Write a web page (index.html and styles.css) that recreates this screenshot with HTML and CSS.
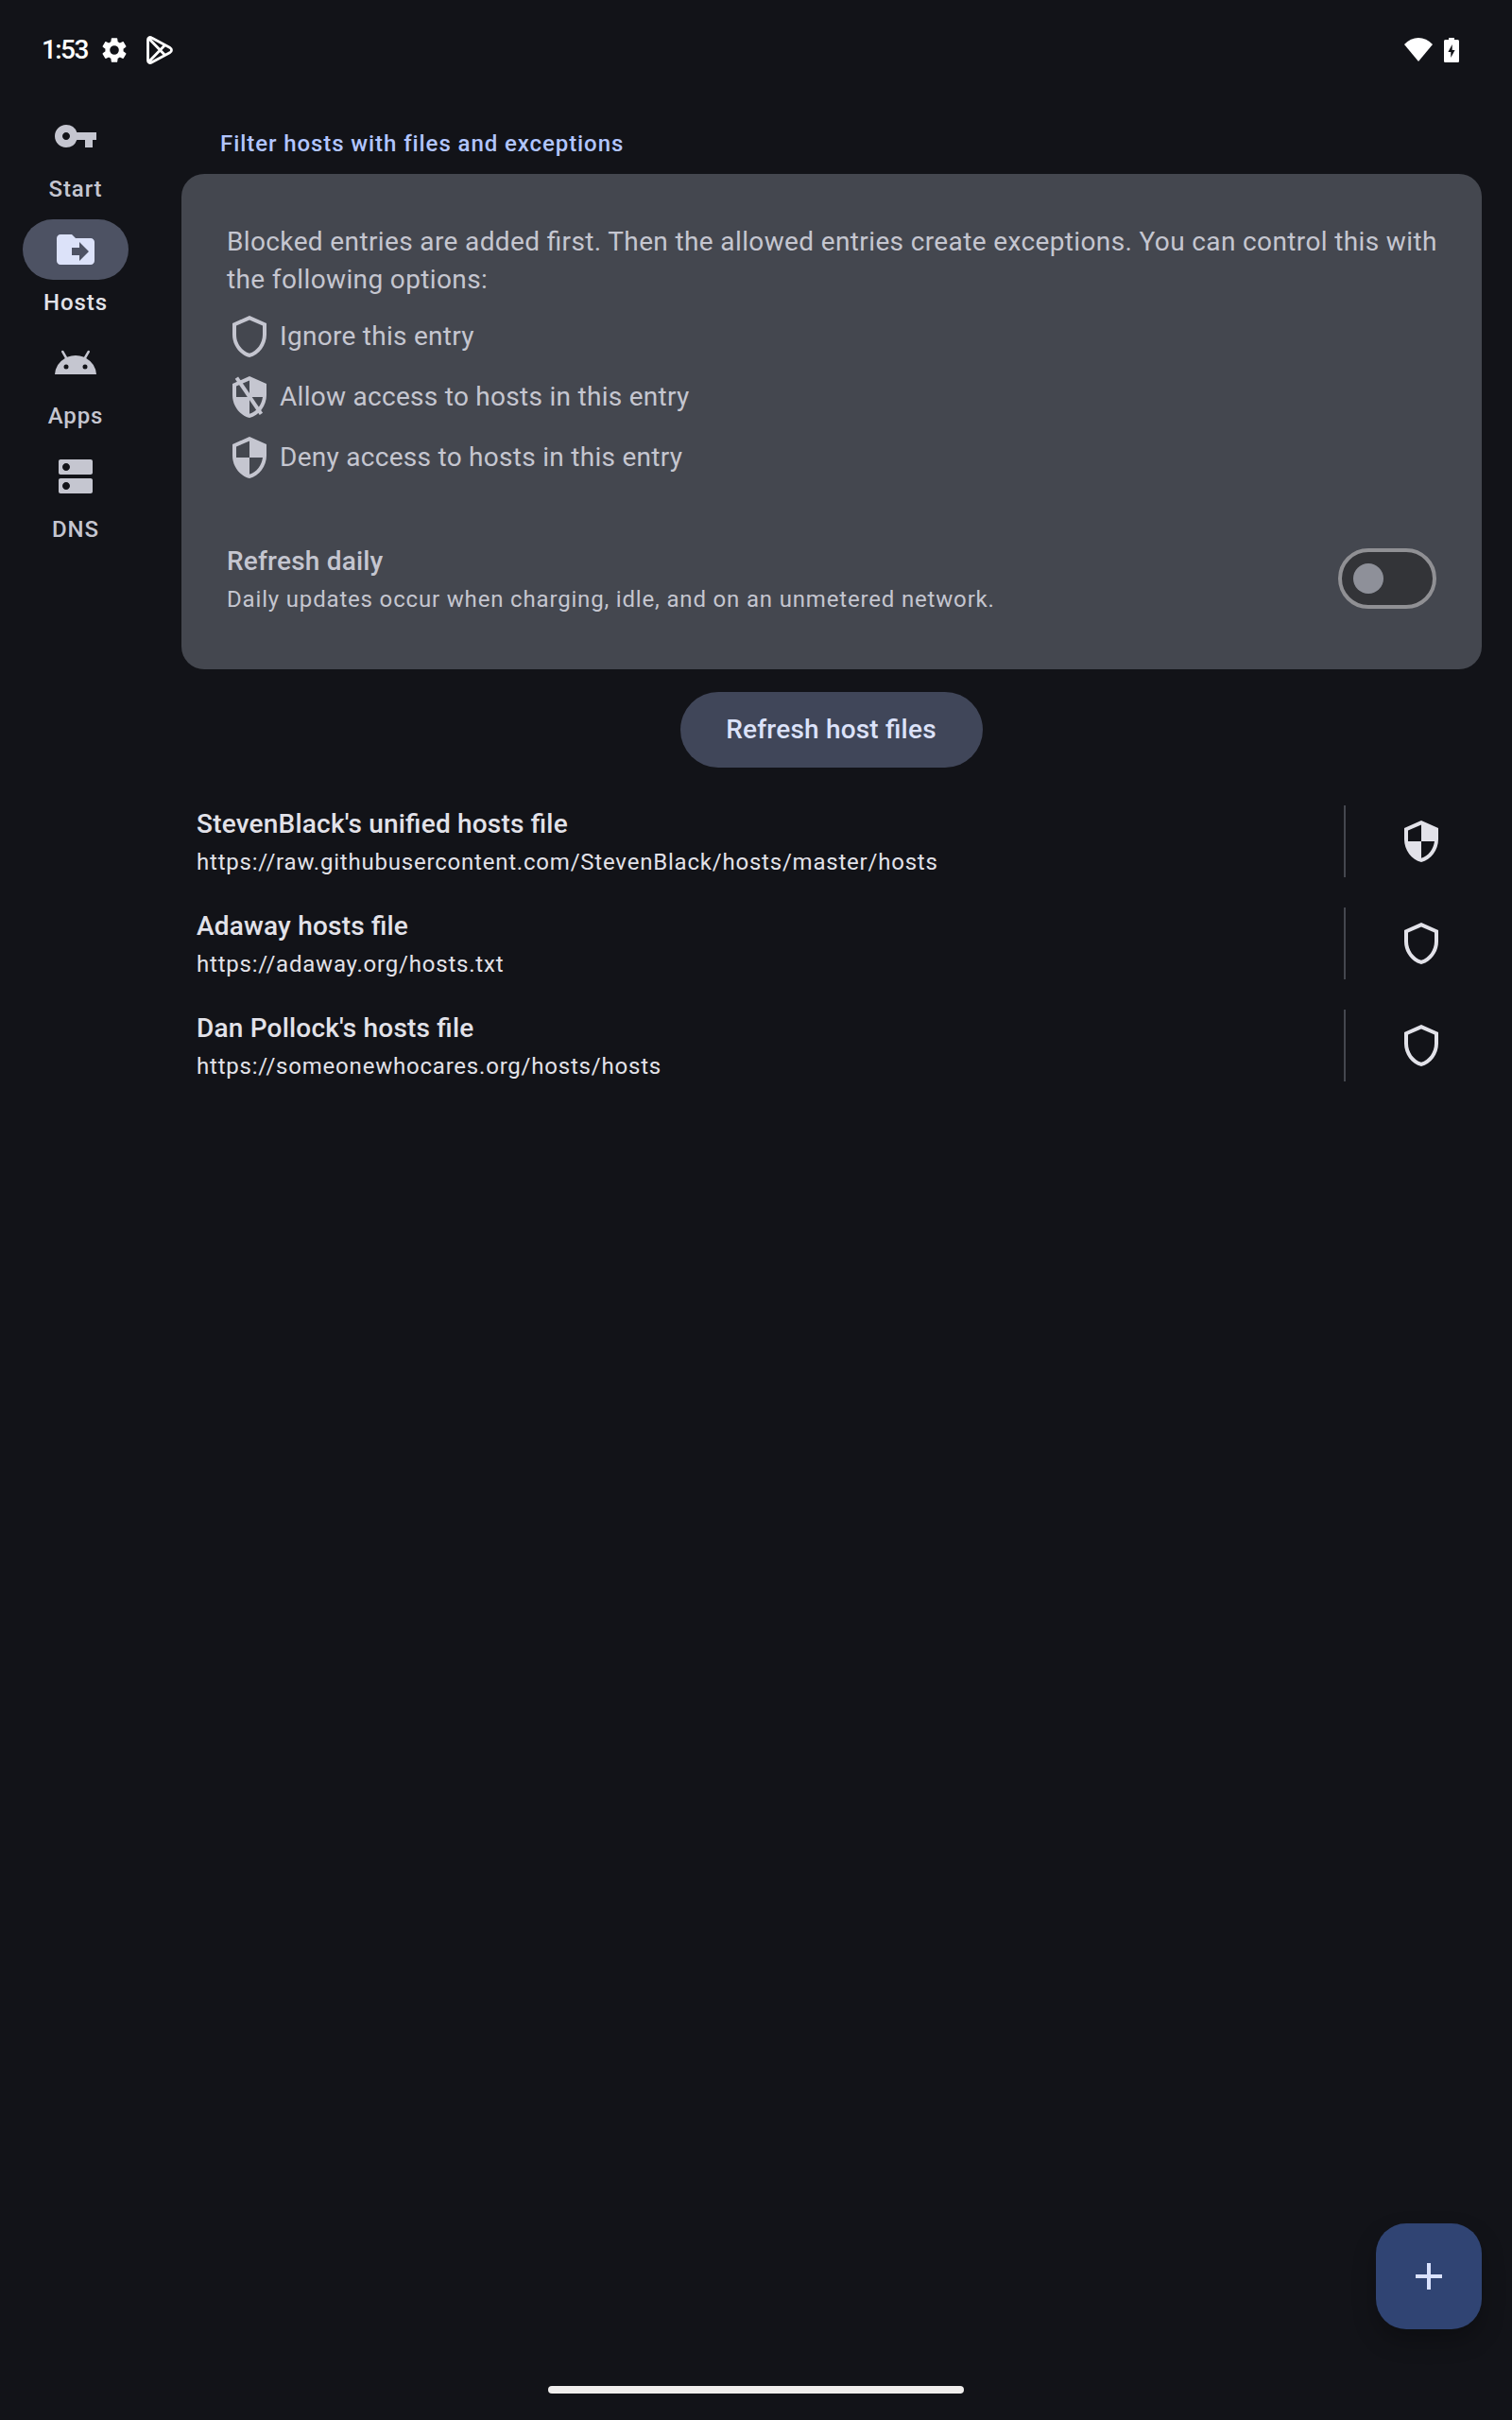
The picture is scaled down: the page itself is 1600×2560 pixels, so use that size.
FILE: index.html
```html
<!DOCTYPE html>
<html lang="en">
<head>
<meta charset="utf-8">
<title>Hosts</title>
<link rel="stylesheet" href="styles.css">
</head>
<body>
<svg class="defs" aria-hidden="true">
  <symbol id="shield" viewBox="0 0 24 24"><path d="M12 1L3 5v6c0 5.55 3.84 10.74 9 12 5.16-1.26 9-6.45 9-12V5l-9-4zm7 10c0 4.52-2.98 8.69-7 9.93-4.02-1.24-7-5.41-7-9.93V6.3l7-3.11 7 3.11V11z"/></symbol>
  <symbol id="shield-deny" viewBox="0 0 24 24"><path d="M12 1L3 5v6c0 5.55 3.84 10.74 9 12 5.16-1.26 9-6.45 9-12V5l-9-4zm0 10.99h7c-.53 4.12-3.28 7.79-7 8.94V12H5V6.3l7-3.11v8.8z"/></symbol>
</svg>
<div class="screen">
  <header class="status">
    <div class="status-left">
      <span class="clock">1:53</span>
      <svg class="gear" viewBox="0 0 24 24"><path d="M19.14 12.94c.04-.3.06-.61.06-.94 0-.32-.02-.64-.07-.94l2.03-1.58c.18-.14.23-.41.12-.61l-1.92-3.32c-.12-.22-.37-.29-.59-.22l-2.39.96c-.5-.38-1.03-.7-1.62-.94l-.36-2.54c-.04-.24-.24-.41-.48-.41h-3.84c-.24 0-.43.17-.47.41l-.36 2.54c-.59.24-1.13.57-1.62.94l-2.39-.96c-.22-.08-.47 0-.59.22L2.74 8.87c-.12.21-.08.47.12.61l2.03 1.58c-.05.3-.09.63-.09.94s.02.64.07.94l-2.03 1.58c-.18.14-.23.41-.12.61l1.92 3.32c.12.22.37.29.59.22l2.39-.96c.5.38 1.03.7 1.62.94l.36 2.54c.05.24.24.41.48.41h3.84c.24 0 .44-.17.47-.41l.36-2.54c.59-.24 1.13-.56 1.62-.94l2.39.96c.22.08.47 0 .59-.22l1.92-3.32c.12-.22.07-.47-.12-.61l-2.01-1.58zM12 15.6A3.6 3.6 0 1 1 12 8.4a3.6 3.6 0 0 1 0 7.2z"/></svg>
      <svg class="play" viewBox="0 0 28 30"><path class="line" d="M1.5 4v22c0 2.200 2 3.200 4 2l19.500-10.600c2-1.200 2-3.600 0-4.800L5.500 2c-2-1.200-4-.2-4 2zM2.300 2.600L19.500 20.300M2.300 27.400L19.500 9.700"/></svg>
    </div>
    <div class="status-right">
      <svg class="wifi" viewBox="0 0 30 25"><path d="M0 7C8.500-2.200 21.500-2.200 30 7L15 25z"/></svg>
      <svg class="battery" viewBox="0 0 16 26"><path fill-rule="evenodd" d="M5 0h6v2h3.400c.9 0 1.600.7 1.600 1.600v20.800c0 .9-.7 1.600-1.600 1.600H1.600C.7 26 0 25.300 0 24.400V3.600C0 2.700.7 2 1.600 2H5zM8.700 7L4.400 15H7.300v6L11.600 13H8.700z"/></svg>
    </div>
  </header>
  <div class="body">
    <nav class="rail">
      <a class="item"><span class="pill"><svg viewBox="0 0 24 24"><path d="M12.650 10A5.990 5.990 0 0 0 7 6c-3.310 0-6 2.690-6 6s2.690 6 6 6a5.990 5.990 0 0 0 5.650-4H17v4h4v-4h2v-4H12.650zM7 14c-1.100 0-2-.9-2-2s.9-2 2-2 2 .9 2 2-.9 2-2 2z"/></svg></span><span>Start</span></a>
      <a class="item active"><span class="pill"><svg viewBox="0 0 24 24"><path d="M20 6h-8l-2-2H4c-1.100 0-1.990.9-1.990 2L2 18c0 1.100.9 2 2 2h16c1.100 0 2-.9 2-2V8c0-1.100-.9-2-2-2zm-6 12v-3h-4v-4h4V8l5 5-5 5z"/></svg></span><span>Hosts</span></a>
      <a class="item"><span class="pill"><svg viewBox="0 0 24 24"><path d="M17.600 9.480l1.840-3.180c.16-.31.04-.69-.26-.85-.29-.15-.65-.06-.83.22l-1.880 3.240a11.430 11.430 0 0 0-8.940 0L5.650 5.670c-.19-.29-.58-.38-.87-.2-.28.18-.37.54-.22.83L6.400 9.480A10.780 10.780 0 0 0 1 18h22a10.780 10.780 0 0 0-5.400-8.520zM7 15.250a1.250 1.250 0 1 1 0-2.500 1.250 1.250 0 0 1 0 2.500zm10 0a1.250 1.250 0 1 1 0-2.500 1.250 1.250 0 0 1 0 2.500z"/></svg></span><span>Apps</span></a>
      <a class="item"><span class="pill"><svg viewBox="0 0 24 24"><path d="M20 13H4c-.55 0-1 .45-1 1v6c0 .55.45 1 1 1h16c.55 0 1-.45 1-1v-6c0-.55-.45-1-1-1zM7 19c-1.100 0-2-.9-2-2s.9-2 2-2 2 .9 2 2-.9 2-2 2zM20 3H4c-.55 0-1 .45-1 1v6c0 .55.45 1 1 1h16c.55 0 1-.45 1-1V4c0-.55-.45-1-1-1zM7 9c-1.100 0-2-.9-2-2s.9-2 2-2 2 .9 2 2-.9 2-2 2z"/></svg></span><span>DNS</span></a>
    </nav>
    <main class="content">
      <h1 class="heading">Filter hosts with files and exceptions</h1>
      <section class="card">
        <p class="intro">Blocked entries are added first. Then the allowed entries create exceptions. You can control this with the following options:</p>
        <ul class="legend">
          <li><svg class="icon"><use href="#shield"/></svg>Ignore this entry</li>
          <li><svg class="icon" viewBox="0 0 24 24"><use href="#shield-deny"/><path class="slash" d="M5.200 1.800L18.200 20.900"/></svg>Allow access to hosts in this entry</li>
          <li><svg class="icon"><use href="#shield-deny"/></svg>Deny access to hosts in this entry</li>
        </ul>
        <div class="setting">
          <div class="setting-text">
            <div class="title">Refresh daily</div>
            <div class="detail">Daily updates occur when charging, idle, and on an unmetered network.</div>
          </div>
          <span class="switch"><span class="thumb"></span></span>
        </div>
      </section>
      <button class="refresh">Refresh host files</button>
      <div class="hosts">
        <div class="host"><div class="host-text"><div class="title">StevenBlack's unified hosts file</div><div class="detail">https://raw.githubusercontent.com/StevenBlack/hosts/master/hosts</div></div><div class="host-action"><svg class="icon"><use href="#shield-deny"/></svg></div></div>
        <div class="host"><div class="host-text"><div class="title">Adaway hosts file</div><div class="detail">https://adaway.org/hosts.txt</div></div><div class="host-action"><svg class="icon"><use href="#shield"/></svg></div></div>
        <div class="host"><div class="host-text"><div class="title">Dan Pollock's hosts file</div><div class="detail">https://someonewhocares.org/hosts/hosts</div></div><div class="host-action"><svg class="icon"><use href="#shield"/></svg></div></div>
      </div>
    </main>
  </div>
  <button class="fab" aria-label="Add"><svg class="icon" viewBox="0 0 24 24"><path d="M19 13h-6v6h-2v-6H5v-2h6V5h2v6h6v2z"/></svg></button>
  <div class="home-bar"></div>
</div>
</body>
</html>
```
FILE: styles.css
```css
* { box-sizing: border-box; margin: 0; padding: 0; }
body { background: #121318; color: #e2e2e9; font-family: Roboto, sans-serif; font-size: 28px; line-height: 40px; }
svg { display: block; fill: currentColor; flex: none; }
.defs { position: absolute; width: 0; height: 0; }
.screen { width: 1600px; height: 2560px; position: relative; display: flex; flex-direction: column; }

.status { height: 104px; padding: 0 56px 0 44px; display: flex; justify-content: space-between; color: #fff; }
.status-left, .status-right { display: flex; align-items: center; }
.clock { font-weight: 500; width: 61px; margin-top: 1px; letter-spacing: -1.6px; }
.gear { width: 32px; height: 32px; margin-top: 2px; }
.play { width: 28px; height: 30px; margin: 2px 0 0 18px; }
.play .line { fill: none; stroke: #fff; stroke-width: 2.8; stroke-linejoin: round; }
.wifi { width: 30px; height: 25px; }
.battery { width: 16px; height: 26px; margin: 2px 0 0 12px; }

.body { display: flex; flex: 1; }
.rail { width: 160px; padding-top: 8px; display: flex; flex-direction: column; align-items: center; gap: 16px; color: #c5c6d0; }
.item { width: 112px; display: flex; flex-direction: column; align-items: center; gap: 8px; font-size: 24px; line-height: 32px; font-weight: 500; letter-spacing: .9px; }
.pill { width: 112px; height: 64px; border-radius: 32px; display: flex; align-items: center; justify-content: center; }
.pill svg { width: 48px; height: 48px; }
.active { color: #e2e2e9; }
.active .pill { background: #4d5263; color: #dce2f9; }

.content { width: 1376px; margin-left: 32px; display: flex; flex-direction: column; }
.heading { margin: 32px 0 16px 41px; font-size: 24px; line-height: 32px; font-weight: 500; letter-spacing: .92px; color: #b1c5ff; }
.card { height: 524px; background: #44474f; color: #c5c6d0; border-radius: 24px; padding: 52px 48px 0; letter-spacing: .28px; font-feature-settings: "liga" 1; }
.intro { margin-right: -4px; letter-spacing: .37px; }
.legend { list-style: none; margin-top: 16px; display: flex; flex-direction: column; gap: 16px; }
.legend li { height: 48px; display: flex; align-items: center; gap: 8px; }
.icon { width: 48px; height: 48px; }
.slash { stroke: currentColor; stroke-width: 2; }
.setting { margin-top: 64px; display: flex; justify-content: space-between; align-items: center; }
.setting-text { padding-top: 2px; margin-bottom: -2px; }
.setting .detail { letter-spacing: .83px; }
.title { font-weight: 500; letter-spacing: .2px; font-feature-settings: "liga" 1; }
.detail { font-size: 24px; line-height: 40px; letter-spacing: .79px; }
.switch { width: 104px; height: 64px; border: 4px solid #909094; border-radius: 32px; background: #333438; display: flex; align-items: center; padding-left: 12px; }
.thumb { width: 32px; height: 32px; border-radius: 50%; background: #8e9099; }
.refresh { align-self: center; margin-top: 24px; padding-right: 1px; width: 320px; height: 80px; border: 0; border-radius: 40px; background: #404659; color: #dce2f9; font: 500 28px/40px Roboto, sans-serif; letter-spacing: .2px; font-feature-settings: "liga" 1; }
.hosts { margin-top: 24px; }
.host { height: 108px; padding: 16px; display: flex; justify-content: space-between; }
.host-action { width: 130px; border-left: 2px solid #44474f; display: flex; align-items: center; padding-left: 56px; }

.fab { position: absolute; right: 32px; bottom: 96px; width: 112px; height: 112px; border: 0; border-radius: 32px; background: #304473; color: #dae2ff; display: flex; align-items: center; justify-content: center; box-shadow: 0 12px 24px rgba(0,0,0,.25); }
.home-bar { width: 440px; height: 8px; margin: 0 auto 28px; border-radius: 4px; background: #f0eeed; }
```
